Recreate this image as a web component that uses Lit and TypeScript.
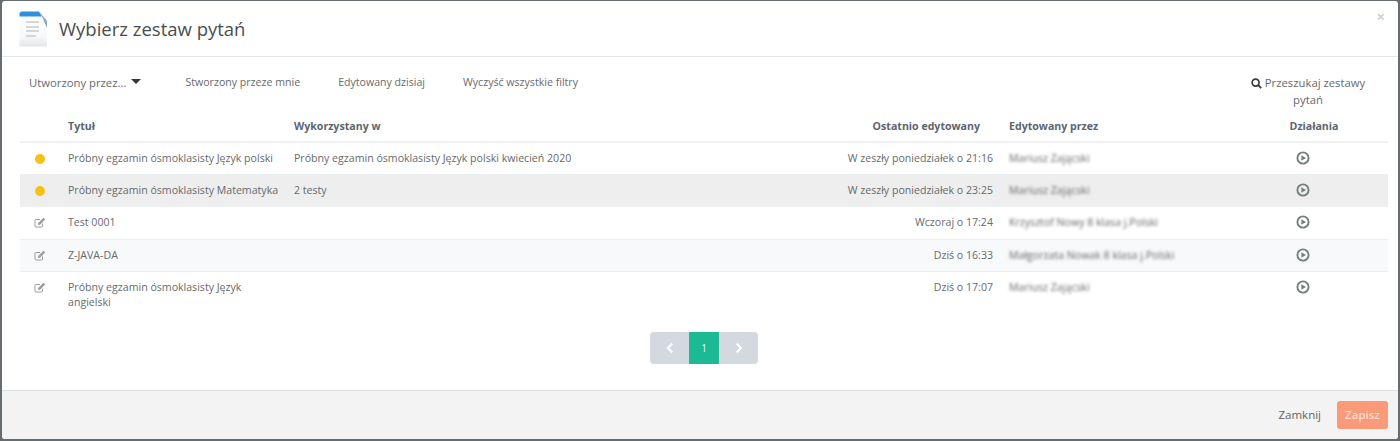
import { LitElement, html, css, svg } from "lit";
import { customElement } from "lit/decorators.js";

const playIcon = html`<svg class="play" viewBox="0 0 14 14" width="14" height="14"><circle cx="7" cy="7" r="5.6" fill="none" stroke="#75807d" stroke-width="1.9"/><path d="M5.4 4.2 L10 7 L5.4 9.8 Z" fill="#75807d"/></svg>`;
const editIcon = html`<svg class="edit" viewBox="0 0 12 11" width="12" height="11"><path d="M8.5 6.5 V9 Q8.5 10 7.5 10 H2 Q1 10 1 9 V3.5 Q1 2.5 2 2.5 H6" fill="none" stroke="#9a9ea0" stroke-width="1"/>${svg`<path d="M4.2 6 L9.4 0.8 L11.2 2.6 L6 7.8 L4 8 Z" fill="#9a9ea0"/>`}</svg>`;
const dot = html`<span class="dot"></span>`;

const rows = [
  { cls: "", status: dot, title: "Próbny egzamin ósmoklasisty Język polski", used: "Próbny egzamin ósmoklasisty Język polski kwiecień 2020", edited: "W zeszły poniedziałek o 21:16", by: "Mariusz Zającski" },
  { cls: "hl", status: dot, title: "Próbny egzamin ósmoklasisty Matematyka", used: "2 testy", edited: "W zeszły poniedziałek o 23:25", by: "Mariusz Zającski" },
  { cls: "", status: editIcon, title: "Test 0001", used: "", edited: "Wczoraj o 17:24", by: "Krzysztof Nowy 8 klasa j.Polski" },
  { cls: "alt", status: editIcon, title: "Z-JAVA-DA", used: "", edited: "Dziś o 16:33", by: "Małgorzata Nowak 8 klasa j.Polski" },
  { cls: "", status: editIcon, title: "Próbny egzamin ósmoklasisty Język angielski", used: "", edited: "Dziś o 17:07", by: "Mariusz Zającski" },
];

@customElement("app-root")
export class AppRoot extends LitElement {
  static styles = css`
    :host { display: block; width: 1400px; height: 441px; box-sizing: border-box; background: #666c70; padding: 1px 2px 2px 2px; font-family: "Open Sans", "Noto Sans", sans-serif; font-size: 10.6px; color: #676a6c; }
    * { box-sizing: border-box; }
    .modal { height: 438px; background: #fff; display: flex; flex-direction: column; position: relative; border-radius: 3px; overflow: hidden; }
    .head { height: 56px; flex: none; display: flex; align-items: center; gap: 11px; padding: 0 0 0 17px; border-bottom: 1px solid #e3e5e6; }
    .head h1 { margin: 0; font-weight: 400; font-size: 18.5px; color: #4a4d50; }
    .close { position: absolute; right: 13px; top: 6px; color: #cfd1d2; font-size: 15px; line-height: 18px; font-weight: 700; }
    .body { flex: 1; padding: 0 10px 0 18px; min-height: 0; }
    .filters { display: flex; align-items: flex-start; height: 54px; padding-top: 17px; line-height: 17px; }
    .filter { margin-right: 38px; white-space: nowrap; }
    .first { margin-left: 9px; margin-right: 44px; display: flex; align-items: center; gap: 5px; font-size: 11.3px; }
    .caret { width: 0; height: 0; border-left: 5px solid transparent; border-right: 5px solid transparent; border-top: 5.5px solid #33363a; margin-top: -2px; }
    .search { margin-left: auto; width: 138px; margin-right: 11px; text-align: center; font-size: 11.3px; }
    .search svg { vertical-align: -2px; margin-right: 3px; }
    table { width: 1368px; border-collapse: collapse; table-layout: fixed; }
    .c1 { width: 40px; } .c2 { width: 226px; } .c3 { width: 440px; } .c4 { width: 275px; } .c5 { width: 239px; } .c6 { width: 148px; }
    th { height: 31px; padding: 0 8px; font-weight: 700; color: #5b6670; text-align: left; border-bottom: 2px solid #eff1f2; }
    th.r { padding-right: 21px; }
    td { padding: 8px; line-height: 15px; vertical-align: top; border-bottom: 1px solid #eceff0; height: 32.25px; }
    td.ttl { padding-right: 6px; }
    tr:last-child td { border-bottom: 0; }
    tr.hl td { background: #eeeeee; }
    tr.alt td { background: #f8f9fa; }
    .r { text-align: right; }
    .ctr { text-align: center; }
    td.st { padding: 8px 0; }
    .dot { display: block; width: 10px; height: 10px; border-radius: 50%; background: #f5c116; margin: 3px auto 0; }
    .edit { display: block; margin: 2px auto 0; }
    td.act { padding: 7px 30px 0 8px; }
    .play { display: block; margin: 1px auto 0; }
    .blur { filter: blur(1.4px); opacity: 0.9; white-space: nowrap; display: block; color: #555; }
    .pager { display: flex; justify-content: center; margin-top: 14px; }
    .pg { height: 32px; background: #d3d9df; display: flex; align-items: center; justify-content: center; width: 39px; }
    .pg.prev { border-radius: 4px 0 0 4px; }
    .pg.next { border-radius: 0 4px 4px 0; }
    .pg.on { width: 30px; background: #1cb995; color: #e8f8f3; font-size: 10px; }
    .foot { height: 49px; flex: none; background: #f3f3f3; border-top: 1px solid #dcdedf; display: flex; align-items: center; justify-content: flex-end; padding: 0 10px 1px 0; gap: 16px; }
    .zam { color: #5f6264; font-size: 11.5px; }
    .zap { width: 51px; height: 28px; border-radius: 3px; background: #fb9a78; color: #fddcd0; display: flex; align-items: center; justify-content: center; font-size: 11.5px; font-weight: 600; }
  `;

  render() {
    return html`<div class="modal">
      <div class="head">
        <svg width="29" height="36" viewBox="0 0 29 36">
          <defs><linearGradient id="pg" x1="0" y1="0" x2="0" y2="1"><stop offset="0" stop-color="#ffffff"/><stop offset="0.7" stop-color="#f7f8f9"/><stop offset="1" stop-color="#e3e5e7"/></linearGradient></defs>
          <path d="M0.5 3 H22 L28 10 V35.5 H0.5 Z" fill="url(#pg)"/>
          <path d="M0.5 3 Q0.5 0.5 3 0.5 H20 L23 5.5 H0.5 Z" fill="#2f8fdc"/>
          <path d="M20 0.5 L28 10 V17 L23 5.5 Z" fill="#8aa3b5"/>
          <path d="M7 11 H20 M7 16 H20 M7 20 H20 M7 25 H17" stroke="#c7cbcf" stroke-width="1.5"/>
        </svg>
        <h1>Wybierz zestaw pytań</h1>
      </div>
      <span class="close">×</span>
      <div class="body">
        <div class="filters">
          <span class="filter first">Utworzony przez... <span class="caret"></span></span>
          <span class="filter">Stworzony przeze mnie</span>
          <span class="filter">Edytowany dzisiaj</span>
          <span class="filter">Wyczyść wszystkie filtry</span>
          <span class="search"><svg width="11" height="11" viewBox="0 0 11 11"><circle cx="4.6" cy="4.6" r="3.5" fill="none" stroke="#33363a" stroke-width="1.6"/><path d="M7.2 7.2 L10.2 10.2" stroke="#33363a" stroke-width="1.8"/></svg>Przeszukaj zestawy pytań</span>
        </div>
        <table>
          <colgroup><col class="c1"/><col class="c2"/><col class="c3"/><col class="c4"/><col class="c5"/><col class="c6"/></colgroup>
          <thead><tr><th></th><th>Tytuł</th><th>Wykorzystany w</th><th class="r">Ostatnio edytowany</th><th>Edytowany przez</th><th class="ctr">Działania</th></tr></thead>
          <tbody>
            ${rows.map((r) => html`<tr class=${r.cls}>
              <td class="st">${r.status}</td>
              <td class="ttl">${r.title}</td>
              <td>${r.used}</td>
              <td class="r">${r.edited}</td>
              <td><span class="blur">${r.by}</span></td>
              <td class="act">${playIcon}</td>
            </tr>`)}
          </tbody>
        </table>
        <div class="pager">
          <span class="pg prev"><svg width="8" height="12" viewBox="0 0 8 12"><path d="M6.2 1.5 L2 6 L6.2 10.5" fill="none" stroke="#fff" stroke-width="2.2"/></svg></span>
          <span class="pg on">1</span>
          <span class="pg next"><svg width="8" height="12" viewBox="0 0 8 12"><path d="M1.8 1.5 L6 6 L1.8 10.5" fill="none" stroke="#fff" stroke-width="2.2"/></svg></span>
        </div>
      </div>
      <div class="foot"><span class="zam">Zamknij</span><span class="zap">Zapisz</span></div>
    </div>`;
  }
}
